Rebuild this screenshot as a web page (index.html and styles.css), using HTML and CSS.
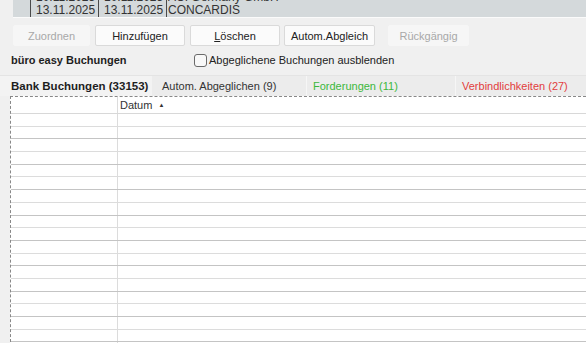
FILE: index.html
```html
<!DOCTYPE html>
<html lang="de">

<head>
    <meta charset="UTF-8">
    <title>Bankabgleich</title>
    <link rel="stylesheet" href="styles.css">
</head>

<body>
    <div class="top-panel">
        <div class="top-rows">
            <div class="top-row">
                <div class="cell cell-gap"></div>
                <div class="cell cell-date">10.11.2025</div>
                <div class="cell cell-date">10.11.2025</div>
                <div class="cell cell-name">ACI Germany GmbH</div>
            </div>
            <div class="top-row">
                <div class="cell cell-gap"></div>
                <div class="cell cell-date">13.11.2025</div>
                <div class="cell cell-date">13.11.2025</div>
                <div class="cell cell-name">CONCARDIS</div>
            </div>
        </div>
    </div>

    <div class="toolbar">
        <button class="btn btn-zuordnen" disabled>Zuordnen</button>
        <button class="btn btn-wide">Hinzufügen</button>
        <button class="btn btn-wide"><u>L</u>öschen</button>
        <button class="btn btn-abgleich">Autom.Abgleich</button>
        <button class="btn btn-undo" disabled>Rückgängig</button>
    </div>

    <div class="filter-row">
        <span class="section-title">büro easy Buchungen</span>
        <label class="check">
            <span class="check-box"></span>
            Abgeglichene Buchungen ausblenden
        </label>
    </div>

    <div class="tabs">
        <div class="tab tab-active">Bank Buchungen (33153)</div>
        <div class="tab tab-auto">Autom. Abgeglichen (9)</div>
        <div class="tab tab-ford">Forderungen (11)</div>
        <div class="tab tab-verb">Verbindlichkeiten (27)</div>
    </div>

    <div class="grid">
        <div class="grid-head">
            <div class="gcell gcell-first"></div>
            <div class="gcell">Datum <span class="sort">&#9650;</span></div>
        </div>
        <div id="grid-body"></div>
    </div>

    <script>
        const gridBody = document.getElementById("grid-body");
        for (let i = 0; i < 19; i++) {
            gridBody.innerHTML += '<div class="grid-row"><div class="gcell gcell-first"></div><div class="gcell"></div></div>';
        }
    </script>
</body>

</html>
```

FILE: styles.css
```css
body {
    margin: 0;
    height: 343px;
    overflow: hidden;
    background-color: #f0f0f0;
    font-family: "Liberation Sans", Arial, sans-serif;
    font-size: 11px;
    color: #222;
}

.top-panel {
    margin-left: 13px;
    height: 17px;
    overflow: hidden;
    background-color: #d4d9db;
    border-bottom: 1px solid #fbfbfb;
}

.top-rows {
    margin-top: -9px;
}

.top-row {
    display: flex;
    height: 13px;
    line-height: 13px;
    font-size: 12px;
    color: #333;
}

.cell {
    white-space: nowrap;
    overflow: hidden;
}

.cell-gap {
    width: 17px;
    border-right: 1px solid #4a4a4a;
}

.cell-date {
    width: 62px;
    padding-left: 5px;
    border-right: 1px solid #4a4a4a;
}

.cell-name {
    padding-left: 1px;
}

.toolbar {
    display: flex;
    margin-top: 7px;
    padding-left: 13px;
    height: 21px;
}

.btn {
    height: 21px;
    margin-right: 5px;
    padding: 0;
    font-family: inherit;
    font-size: 11px;
    color: #222;
    background-color: #fbfbfb;
    border: 1px solid #dadada;
    border-radius: 2px;
}

.btn:disabled {
    color: #a8a8a8;
    background-color: #f6f6f6;
    border-color: #f6f6f6;
}

.btn-zuordnen {
    width: 77px;
}

.btn-wide {
    width: 90px;
}

.btn-abgleich {
    width: 91px;
    margin-left: -1px;
    margin-right: 13px;
}

.btn-undo {
    width: 81px;
}

.filter-row {
    display: flex;
    align-items: center;
    height: 20px;
    margin-top: 4px;
    padding-left: 11px;
}

.section-title {
    width: 183px;
    font-size: 11px;
    font-weight: bold;
    color: #1e1e1e;
    white-space: nowrap;
}

.check {
    display: flex;
    align-items: center;
    gap: 2px;
    color: #222;
}

.check-box {
    width: 11px;
    height: 11px;
    border: 1px solid #6a6a6a;
    border-radius: 3px;
    background-color: #f8f8f8;
}

.tabs {
    display: flex;
    margin-top: 5px;
    height: 20px;
    background-color: #ececec;
    border-top: 1px solid #e4e4e4;
}

.tab {
    display: flex;
    align-items: center;
    padding-left: 6px;
    box-sizing: border-box;
    white-space: nowrap;
    color: #333;
}

.tab-active {
    width: 152px;
    padding-left: 11px;
    font-size: 11.5px;
    font-weight: bold;
    color: #1e1e1e;
    background-color: #f3f3f3;
}

.tab-auto {
    width: 154px;
    padding-left: 10px;
}

.tab-ford {
    width: 149px;
    color: #3cb83c;
    border-left: 1px solid #f6f6f6;
}

.tab-verb {
    flex: 1;
    color: #e23c3c;
    border-left: 1px solid #f6f6f6;
}

.grid {
    margin-left: 10px;
    height: 250px;
    overflow: hidden;
    background-color: #fff;
    border-top: 1px dashed #888;
    border-left: 1px dashed #888;
}

.grid-head {
    display: flex;
    height: 16px;
    border-bottom: 1px solid #d8d8d8;
}

.grid-row {
    display: flex;
    height: 11.7px;
    border-bottom: 1px solid #c4c4c4;
}

.grid-row:nth-child(odd) {
    border-bottom-color: #dcdcdc;
}

.gcell {
    display: flex;
    align-items: center;
    padding-left: 2px;
    color: #333;
}

.gcell-first {
    width: 104px;
    border-right: 1px solid #dcdcdc;
}

.sort {
    margin-left: 6px;
    font-size: 6px;
}
```
